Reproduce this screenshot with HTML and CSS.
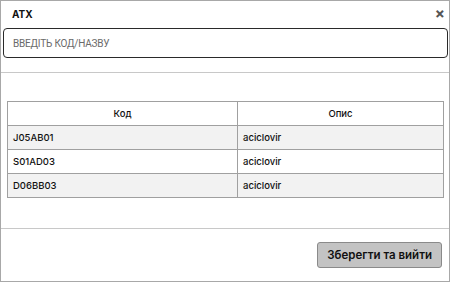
FILE: index.html
```html
<!DOCTYPE html>
<html lang="uk">
<head>
    <meta charset="UTF-8">
    <title>ATX</title>
    <link rel="stylesheet" href="styles.css">
</head>
<body>
    <div class="modal">
        <div class="modal-header">
            <span class="modal-title">ATX</span>
            <span class="modal-close">&times;</span>
        </div>
        <div class="search">
            <input type="text" placeholder="ВВЕДІТЬ КОД/НАЗВУ">
        </div>
        <div class="modal-body">
            <table class="atx-table">
                <thead>
                    <tr><th class="col-code">Код</th><th>Опис</th></tr>
                </thead>
                <tbody>
                    <tr><td>J05AB01</td><td>aciclovir</td></tr>
                    <tr><td>S01AD03</td><td>aciclovir</td></tr>
                    <tr><td>D06BB03</td><td>aciclovir</td></tr>
                </tbody>
            </table>
        </div>
        <div class="modal-footer">
            <button class="btn-save">Зберегти та вийти</button>
        </div>
    </div>
</body>
</html>
```

FILE: styles.css
```css
html, body {
    margin: 0;
    padding: 0;
    background: #fff;
}
body {
    font-family: Inter, "Open Sans", sans-serif;
    color: #111;
}
.modal {
    width: 450px;
    height: 282px;
    box-sizing: border-box;
    border: 1px solid #a8a8a8;
    display: flex;
    flex-direction: column;
}
.modal-header {
    display: flex;
    justify-content: space-between;
    align-items: center;
    height: 24px;
    padding: 0 4px 0 11px;
}
.modal-title {
    font-size: 10px;
    font-weight: 700;
    padding-top: 1px;
}
.modal-close {
    font-size: 15px;
    font-weight: 700;
    color: #555;
    line-height: 1;
}
.search {
    padding: 3px 1px 14px 2px;
    border-bottom: 1px solid #c8c8c8;
}
.search input {
    width: 100%;
    height: 30px;
    box-sizing: border-box;
    border: 1px solid #2a2a2a;
    border-radius: 4px;
    padding: 0 9px;
    font-family: "Roboto", sans-serif;
    font-size: 10px;
}
.search input::placeholder {
    color: #6a6a6a;
    letter-spacing: -0.2px;
}
.modal-body {
    padding: 28px 5px 30px 6px;
    border-bottom: 1px solid #c8c8c8;
}
.atx-table {
    width: 100%;
    border-collapse: collapse;
    table-layout: fixed;
    font-size: 9.5px;
    font-weight: 500;
}
.atx-table th,
.atx-table td {
    border: 1px solid #a0a0a0;
    height: 23px;
    padding: 0 5px;
}
.atx-table th {
    font-weight: 500;
    text-align: center;
}
.atx-table .col-code {
    width: 219px;
}
.atx-table tbody tr:nth-child(odd) {
    background: #f2f2f2;
}
.modal-footer {
    flex: 1;
    display: flex;
    justify-content: flex-end;
    align-items: center;
    padding: 0 7px 0 0;
}
.btn-save {
    background: #c3c3c3;
    border: 1px solid #8a8a8a;
    border-radius: 3px;
    height: 26px;
    padding: 0 9px;
    font-family: Inter, sans-serif;
    font-size: 11.5px;
    font-weight: 600;
    color: #111;
}
```
